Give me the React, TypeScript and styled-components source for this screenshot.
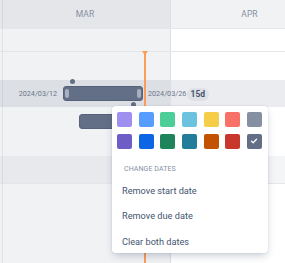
import React from "react";
import styled, { createGlobalStyle } from "styled-components";

const Global = createGlobalStyle`
  html, body { margin: 0; padding: 0; background: #ffffff; }
  body { font-family: Roboto, "Liberation Sans", sans-serif; }
`;

const Timeline = styled.div`
  position: relative;
  width: 285px;
  height: 263px;
  overflow: hidden;
  display: flex;
  flex-direction: column;
  &::before {
    content: "";
    position: absolute;
    left: 2px;
    top: 0;
    bottom: 0;
    width: 1px;
    background: rgba(9, 30, 66, 0.07);
    z-index: 1;
  }
`;

const Row = styled.div<{ $h: number; $line?: boolean; $grow?: boolean }>`
  position: relative;
  display: grid;
  grid-template-columns: 170px 1px 157px;
  height: ${(p) => (p.$grow ? "auto" : `${p.$h}px`)};
  flex: ${(p) => (p.$grow ? "1 0 auto" : "0 0 auto")};
  border-bottom: ${(p) => (p.$line ? "1px solid #e4e6ea" : "none")};
`;

const Cell = styled.div<{ $bg: string }>`
  background: ${(p) => p.$bg};
  display: flex;
  align-items: center;
  justify-content: center;
`;

const Divider = styled.div`
  background: #dcdfe4;
`;

const MonthLabel = styled.span`
  font-size: 8.5px;
  letter-spacing: 0.1px;
  color: #8590a2;
  text-transform: uppercase;
`;

const Overlay = styled.div`
  position: absolute;
  inset: 0;
  pointer-events: none;
`;

const TodayLine = styled.div`
  position: absolute;
  left: 144px;
  top: 51px;
  bottom: 0;
  width: 2px;
  background: #fb9c5a;
  &::before {
    content: "";
    position: absolute;
    left: -2px;
    top: 0;
    width: 6px;
    height: 3px;
    background: #fb9c5a;
    clip-path: polygon(0 0, 100% 0, 66% 100%, 33% 100%);
  }
`;

const Bar = styled.div<{ $left: number; $top: number; $width: number }>`
  position: absolute;
  left: ${(p) => p.$left}px;
  top: ${(p) => p.$top}px;
  width: ${(p) => p.$width}px;
  height: 15px;
  box-sizing: border-box;
  background: #626f86;
  border: 1px solid #56627a;
  border-radius: 3px;
`;

const Handle = styled.div<{ $side: "left" | "right" }>`
  position: absolute;
  top: 2px;
  ${(p) => p.$side}: 1px;
  width: 4px;
  height: 9px;
  border-radius: 2px;
  background: #a9b0bd;
`;

const Dot = styled.div<{ $x: number; $y: number }>`
  position: absolute;
  left: ${(p) => p.$x - 2.5}px;
  top: ${(p) => p.$y - 2.5}px;
  width: 5px;
  height: 5px;
  border-radius: 50%;
  background: #626f86;
`;

const DateText = styled.span<{ $left?: number; $right?: number; $top: number }>`
  position: absolute;
  ${(p) => (p.$left !== undefined ? `left: ${p.$left}px;` : `right: ${p.$right}px;`)}
  top: ${(p) => p.$top}px;
  font-size: 7.2px;
  line-height: 10px;
  color: #6b778c;
  white-space: nowrap;
`;

const Badge = styled.span`
  position: absolute;
  left: 187px;
  top: 87.5px;
  height: 13px;
  padding: 0 3.5px;
  border-radius: 6.5px;
  background: #dfe1e6;
  color: #44546f;
  font-size: 8.5px;
  font-weight: 700;
  line-height: 13px;
`;

const Popup = styled.div`
  position: absolute;
  left: 112px;
  top: 106px;
  width: 156px;
  height: 147px;
  box-sizing: border-box;
  background: #ffffff;
  border-radius: 3px;
  box-shadow: 0 4px 8px -2px rgba(9, 30, 66, 0.25), 0 0 1px rgba(9, 30, 66, 0.31);
  padding: 6px 0 0 0;
  display: flex;
  flex-direction: column;
  z-index: 2;
`;

const Swatches = styled.div`
  display: grid;
  grid-template-columns: repeat(7, 15px);
  column-gap: 6.67px;
  row-gap: 6.5px;
  padding-left: 5px;
`;

const Swatch = styled.div<{ $color: string }>`
  width: 15px;
  height: 15px;
  border-radius: 2px;
  background: ${(p) => p.$color};
  display: flex;
  align-items: center;
  justify-content: center;
`;

const SectionTitle = styled.div`
  margin-top: 14px;
  padding-left: 12px;
  height: 12px;
  flex: 0 0 auto;
  line-height: 12px;
  font-size: 7px;
  letter-spacing: 0.1px;
  color: #8590a2;
  text-transform: uppercase;
`;

const Menu = styled.div`
  display: flex;
  flex-direction: column;
  margin-top: 3px;
`;

const MenuItem = styled.div`
  flex: 0 0 auto;
  height: 25.5px;
  line-height: 25.5px;
  padding-left: 10px;
  font-size: 9.2px;
  color: #44546f;
  white-space: nowrap;
`;

const TOP = ["#9f8fef", "#579dff", "#4bce97", "#6cc3e0", "#f5cd47", "#f87168", "#8590a2"];
const BOTTOM = ["#6e5dc6", "#0c66e4", "#1f845a", "#227d9b", "#c25100", "#c9372c", "#626f86"];

const rows = [
  { h: 28, line: true, mar: "#e4e6ea", apr: "#f1f2f4", header: true },
  { h: 22, line: true, mar: "#f1f2f4", apr: "#ffffff" },
  { h: 28, mar: "#f1f2f4", apr: "#ffffff" },
  { h: 27, mar: "#dcdfe4", apr: "#ebecf0" },
  { h: 49, mar: "#f1f2f4", apr: "#ffffff" },
  { h: 27, line: true, mar: "#e8e9ed", apr: "#f4f5f7" },
  { h: 0, grow: true, mar: "#f1f2f4", apr: "#ffffff" },
];

const Check = () => (
  <svg width="8" height="8" viewBox="0 0 8 8" fill="none">
    <path d="M1.5 4.2 L3.2 5.8 L6.5 2.3" stroke="#ffffff" strokeWidth="1.3" strokeLinecap="round" strokeLinejoin="round" />
  </svg>
);

export default function App() {
  return (
    <>
      <Global />
      <Timeline>
        {rows.map((r, i) => (
          <Row key={i} $h={r.h} $line={r.line} $grow={r.grow}>
            <Cell $bg={r.mar}>{r.header && <MonthLabel>Mar</MonthLabel>}</Cell>
            <Divider />
            <Cell $bg={r.apr}>{r.header && <MonthLabel>Apr</MonthLabel>}</Cell>
          </Row>
        ))}
        <Overlay>
          <Dot $x={72} $y={81} />
          <Bar $left={63} $top={86} $width={80}>
            <Handle $side="left" />
            <Handle $side="right" />
          </Bar>
          <Dot $x={133} $y={104.5} />
          <DateText $right={285 - 57} $top={89}>2024/03/12</DateText>
          <DateText $left={148} $top={89}>2024/03/26</DateText>
          <Badge>15d</Badge>
          <Bar $left={79} $top={114} $width={60} />
          <TodayLine />
        </Overlay>
        <Popup>
          <Swatches>
            {TOP.map((c) => (
              <Swatch key={c} $color={c} />
            ))}
            {BOTTOM.map((c, i) => (
              <Swatch key={c} $color={c}>
                {i === BOTTOM.length - 1 && <Check />}
              </Swatch>
            ))}
          </Swatches>
          <SectionTitle>Change dates</SectionTitle>
          <Menu>
            <MenuItem>Remove start date</MenuItem>
            <MenuItem>Remove due date</MenuItem>
            <MenuItem>Clear both dates</MenuItem>
          </Menu>
        </Popup>
      </Timeline>
    </>
  );
}
